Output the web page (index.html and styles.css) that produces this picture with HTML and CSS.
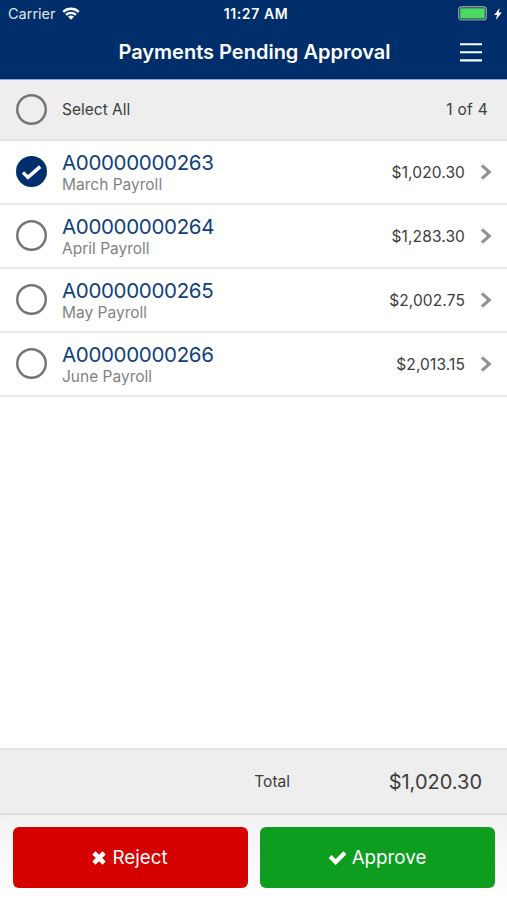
FILE: index.html
```html
<!DOCTYPE html>
<html lang="en">
<head>
<meta charset="utf-8">
<meta name="viewport" content="width=device-width, initial-scale=1">
<title>Payments Pending Approval</title>
<link rel="stylesheet" href="styles.css">
</head>
<body>
<svg class="defs" width="0" height="0" aria-hidden="true">
  <symbol id="chevron" viewBox="0 0 12 16"><path d="M1.9 1.4 9.2 8l-7.3 6.6" fill="none" stroke="currentColor" stroke-width="3.3"/></symbol>
</svg>
<div class="screen">
  <header class="header">
    <div class="status">
      <div class="carrier"><span>Carrier</span>
        <svg class="wifi" viewBox="0 0 18 13"><path d="M1.2 4.9a11.2 11.2 0 0 1 15.6 0M4 7.8a7.2 7.2 0 0 1 10 0" fill="none" stroke="#fff" stroke-width="2.3"/><path d="M9 12.8 6 9.8a4.4 4.4 0 0 1 6 0z" fill="#fff"/></svg>
      </div>
      <span class="clock">11:27 AM</span>
      <div class="power">
        <svg class="battery" viewBox="0 0 29 15"><rect x=".7" y=".7" width="27.6" height="13.2" rx="3" fill="none" stroke="#8d9893" stroke-width="1.4"/><rect x="2.2" y="2.2" width="24.6" height="10.2" rx="1" fill="#4cd964"/></svg>
        <svg class="bolt" viewBox="0 0 8 12"><path d="M5.6 0 .2 6.9h2.9L1.8 12l6-7.4H4.7z" fill="#fff"/></svg>
      </div>
    </div>
    <div class="titlebar">
      <h1 class="title">Payments Pending Approval</h1>
      <svg class="menu" viewBox="0 0 22 19"><path d="M0 1.2h22M0 9.3h22M0 17.4h22" stroke="#fff" stroke-width="2.1"/></svg>
    </div>
  </header>
  <div class="select-all">
    <span class="radio"></span>
    <span class="select-label">Select All</span>
    <span class="count">1 of 4</span>
  </div>
  <ul class="payments">
    <li class="payment">
      <span class="radio checked"><svg viewBox="0 0 32 32"><path d="m7.2 16.9 5.2 5.2L25 11" fill="none" stroke="#fff" stroke-width="3.6"/></svg></span>
      <div class="info"><span class="id">A00000000263</span><span class="desc">March Payroll</span></div>
      <span class="amount">$1,020.30</span><svg class="chevron"><use href="#chevron"/></svg>
    </li>
    <li class="payment">
      <span class="radio"></span>
      <div class="info"><span class="id">A00000000264</span><span class="desc">April Payroll</span></div>
      <span class="amount">$1,283.30</span><svg class="chevron"><use href="#chevron"/></svg>
    </li>
    <li class="payment">
      <span class="radio"></span>
      <div class="info"><span class="id">A00000000265</span><span class="desc">May Payroll</span></div>
      <span class="amount">$2,002.75</span><svg class="chevron"><use href="#chevron"/></svg>
    </li>
    <li class="payment">
      <span class="radio"></span>
      <div class="info"><span class="id">A00000000266</span><span class="desc">June Payroll</span></div>
      <span class="amount">$2,013.15</span><svg class="chevron"><use href="#chevron"/></svg>
    </li>
  </ul>
  <div class="total"><span class="total-label">Total</span><span class="total-amount">$1,020.30</span></div>
  <footer class="actions">
    <button class="btn reject"><svg class="cross" viewBox="0 0 14 14"><path d="m1.9 1.9 10.2 10.2M12.1 1.9 1.9 12.1" stroke="#fff" stroke-width="4.6"/></svg><span>Reject</span></button>
    <button class="btn approve"><svg class="tick" viewBox="0 0 17 14"><path d="m2.6 7 4.1 4 7.7-7.8" fill="none" stroke="#fff" stroke-width="4.3" stroke-linecap="square"/></svg><span>Approve</span></button>
  </footer>
</div>
</body>
</html>
```
FILE: styles.css
```css
* { box-sizing: border-box; }
body { margin: 0; background: #fff; font-family: Inter, "Liberation Sans", sans-serif; color: #3c3c3c; }
svg { display: block; flex: none; }
.defs { position: absolute; }
.screen { display: flex; flex-direction: column; height: 900px; }
.header { height: 80px; background: #002e6a; color: #fff; border-bottom: 1px solid #8fa9cf; }
.status { display: grid; grid-template-columns: 1fr auto 1fr; align-items: center; height: 27px; padding: 0 5px 0 8px; }
.carrier { display: flex; align-items: center; gap: 6px; font-size: 14.5px; color: #dfe6f0; }
.wifi { width: 18px; height: 13px; }
.clock { padding-left: 2px; font-size: 14px; font-weight: 600; letter-spacing: .6px; }
.power { display: flex; align-items: center; justify-content: flex-end; gap: 7px; }
.battery { width: 29px; height: 15px; }
.bolt { width: 8px; height: 12px; }
.titlebar { display: grid; grid-template-columns: 1fr auto 1fr; align-items: center; height: 50px; padding: 0 25px 0 27px; }
.title { grid-column: 2; margin: 0; font-size: 20px; font-weight: 600; line-height: 28px; }
.menu { justify-self: end; width: 22px; height: 19px; }
.select-all { display: flex; align-items: center; height: 61px; padding: 0 19px 0 16px; background: #eee; border-bottom: 2px solid #e1e1e1; font-size: 15.5px; }
.radio { flex: none; width: 31px; height: 31px; margin-right: 15px; box-shadow: inset 0 0 0 2.5px #757575; border-radius: 50%; }
.payment .radio { margin-bottom: 1px; }
.radio.checked { box-shadow: none; background: #002e6a; }
.count { margin-left: auto; letter-spacing: .3px; }
.payments { margin: 0; padding: 0; list-style: none; flex: 1; }
.payment { display: flex; align-items: center; height: 64px; padding: 0 15px 0 16px; border-bottom: 2px solid #e5e5e5; }
.info { display: flex; flex-direction: column; padding-top: 1px; }
.id { font-size: 20.5px; line-height: 24px; color: #113f7c; letter-spacing: -.33px; }
.desc { font-size: 15.5px; line-height: 20px; color: #828282; }
.amount { margin-left: auto; font-size: 15.5px; letter-spacing: .12px; }
.chevron { width: 12px; height: 16px; margin-left: 15px; color: #929292; }
.total { display: flex; align-items: center; justify-content: flex-end; height: 67px; padding-right: 25px; background: #eee; border-top: 2px solid #e3e3e3; border-bottom: 2px solid #dedede; }
.total-label { font-size: 15.5px; }
.total-amount { width: 192px; text-align: right; font-size: 20px; }
.actions { display: grid; grid-template-columns: 1fr 1fr; gap: 12px; height: 85px; padding: 12px 12px 12px 13px; background: linear-gradient(#f2f2f2, #fff); }
.btn { display: flex; align-items: center; justify-content: center; gap: 6px; height: 61px; padding: 0; border: 0; border-radius: 6px; font: 18.8px Inter, sans-serif; color: #fff; }
.reject { background: #d50000; }
.reject span { margin-right: 1px; }
.approve { background: #0d9d1f; }
.cross { width: 14px; height: 14px; }
.tick { width: 17px; height: 14px; }
```
